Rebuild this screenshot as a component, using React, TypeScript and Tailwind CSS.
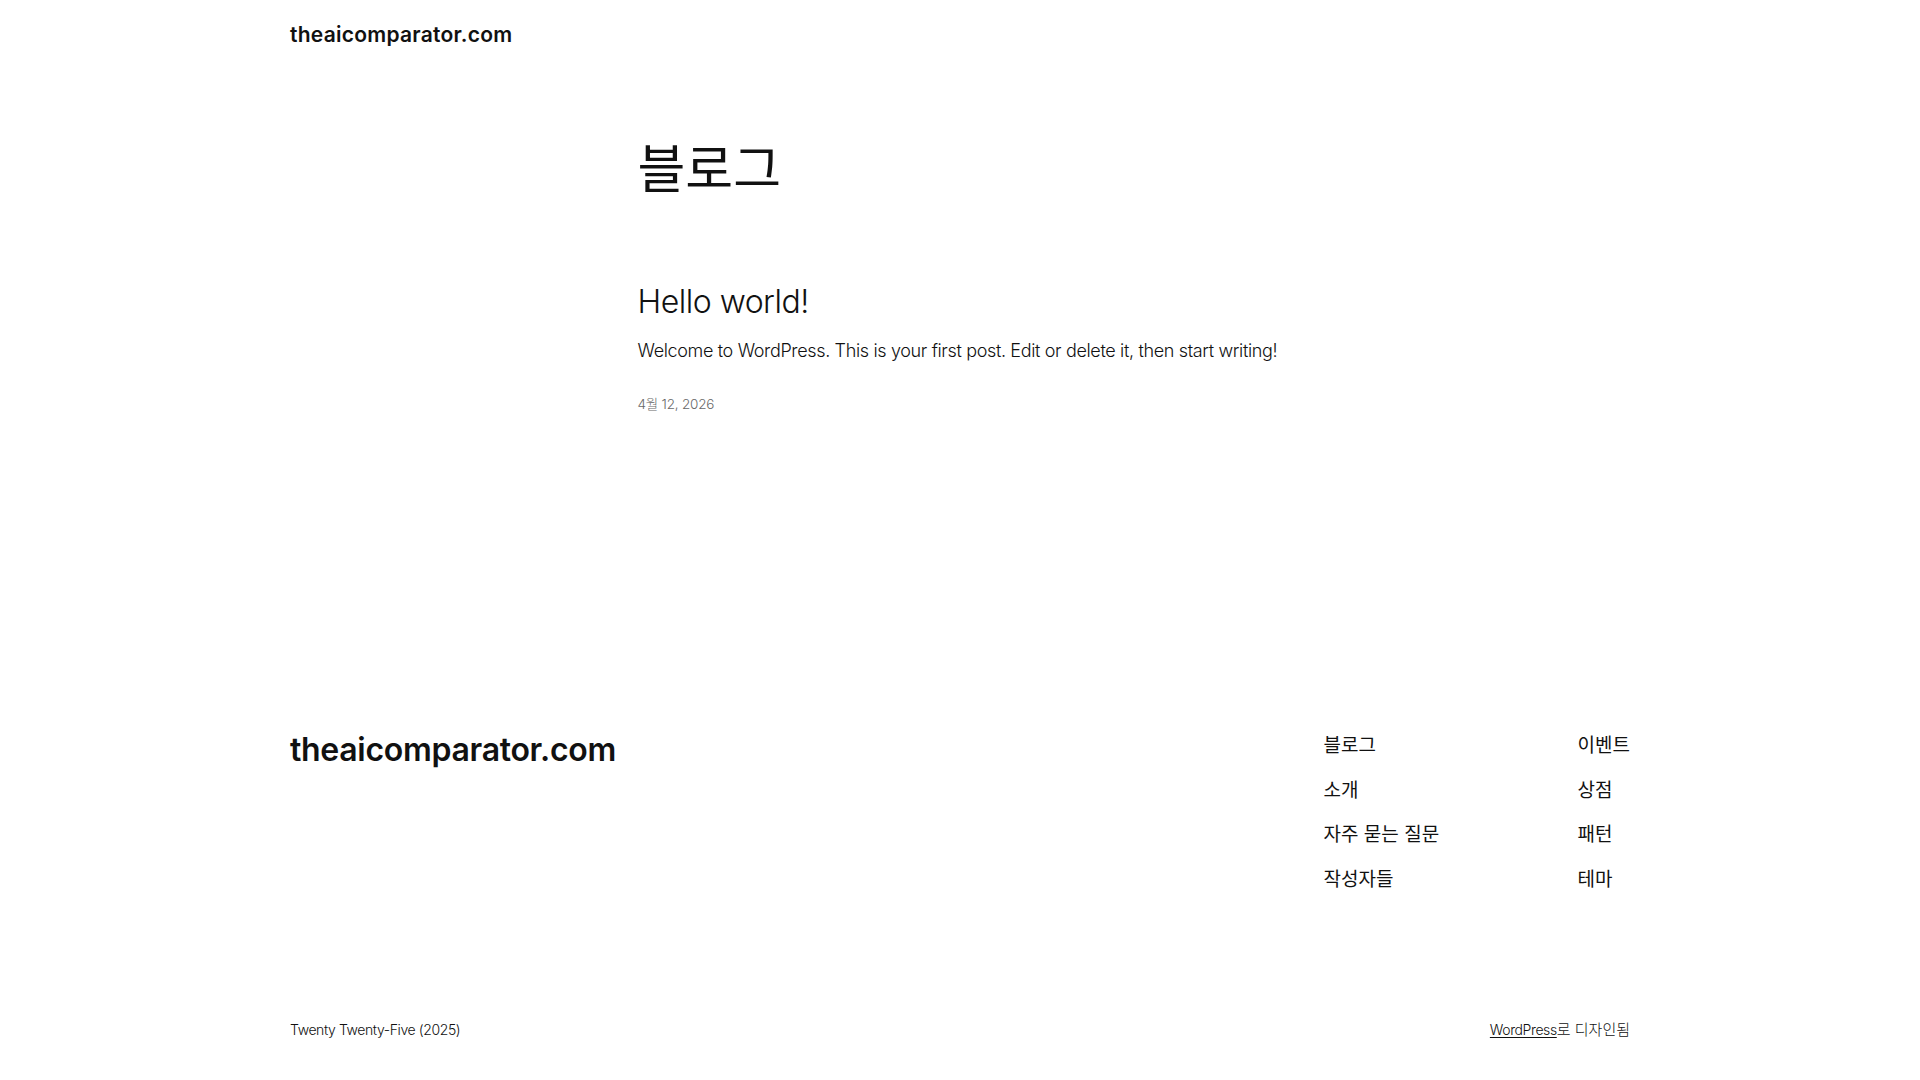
const FONT = "font-['Inter','Noto_Sans_CJK_KR',sans-serif]"

const navLeft = ['블로그', '소개', '자주 묻는 질문', '작성자들']
const navRight = ['이벤트', '상점', '패턴', '테마']

export default function App() {
  return (
    <div className={`${FONT} min-h-screen bg-white text-[#111111]`}>
      {/* Header */}
      <header className="mx-auto flex h-[70px] w-[1340px] items-center">
        <a className="text-[21px] font-semibold leading-[28px] tracking-[0.25px]">theaicomparator.com</a>
      </header>

      {/* Main */}
      <main className="mx-auto w-[645px]">
        <h1 className="mt-[69px] text-[52px] font-normal leading-[1.2]">블로그</h1>

        <article className="mt-[82px]">
          <h2 className="text-[32px] font-light leading-[1.2] tracking-[-0.5px]">Hello world!</h2>
          <p className="mt-[15px] whitespace-nowrap text-[18px] font-light leading-[1.6] tracking-[-0.35px]">
            Welcome to WordPress. This is your first post. Edit or delete it, then start writing!
          </p>
          <p className="mt-[29px] text-[13.5px] font-light leading-[1.4] tracking-[-0.2px] text-[#686868]">
            4월 12, 2026
          </p>
        </article>
      </main>

      {/* Footer */}
      <footer className="mx-auto mt-[320px] w-[1340px]">
        <div className="flex items-start justify-between">
          <a className="text-[32px] font-semibold leading-[34px] tracking-[-0.3px]">theaicomparator.com</a>
          <nav className="flex">
            <ul className="flex w-[254px] flex-col gap-[19.5px]">
              {navLeft.map((item) => (
                <li key={item} className="text-[19px] leading-[25px]">
                  {item}
                </li>
              ))}
            </ul>
            <ul className="flex flex-col gap-[19.5px]">
              {navRight.map((item) => (
                <li key={item} className="text-[19px] leading-[25px]">
                  {item}
                </li>
              ))}
            </ul>
          </nav>
        </div>

        <div className="mt-[128px] flex items-center justify-between pb-[40px] text-[14px] font-light leading-[20px] tracking-[-0.4px]">
          <p>Twenty Twenty-Five (2025)</p>
          <p>
            <a className="underline underline-offset-2">WordPress</a>
            <span className="text-[15px] tracking-normal">로 디자인됨</span>
          </p>
        </div>
      </footer>
    </div>
  )
}
